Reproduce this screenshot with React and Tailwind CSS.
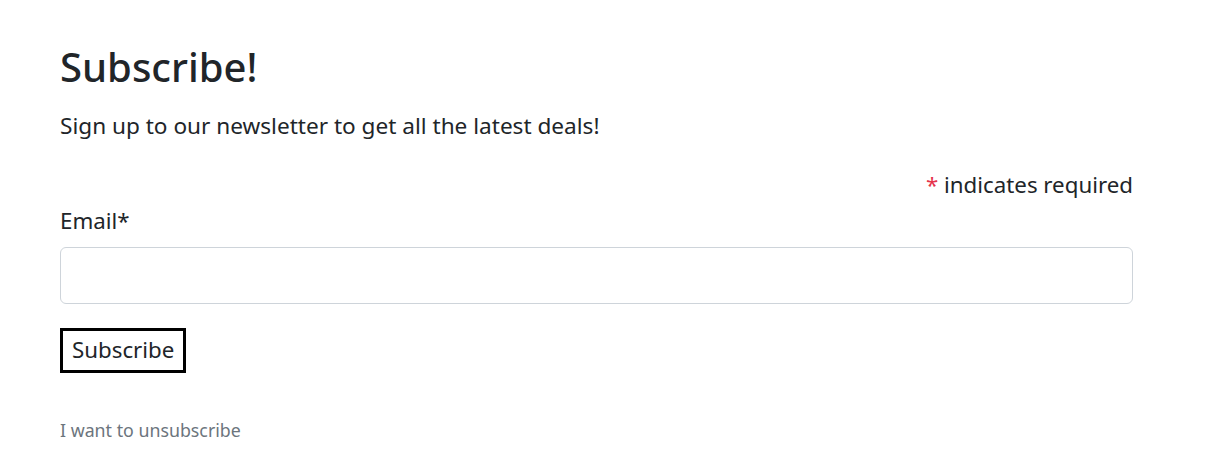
import React from "react";

export default function App() {
  return (
    <div
      className="min-h-[472px] bg-white text-[#212529] px-[60px] pt-[43px]"
      style={{ fontFamily: '"Noto Sans", "Open Sans", sans-serif' }}
    >
      <div className="w-[1073px]">
        {/* Heading */}
        <h1 className="text-[40px] leading-[1.2] font-medium">Subscribe!</h1>
        <p className="text-[22.6px] leading-[1.5] mt-[18px]">
          Sign up to our newsletter to get all the latest deals!
        </p>

        {/* Form */}
        <form className="mt-[25px]" onSubmit={(e) => e.preventDefault()}>
          <div className="text-right text-[22.3px] leading-[1.5]">
            <span className="text-[#e5334b]">*</span> indicates required
          </div>
          <label className="block text-[22.3px] leading-[1.5] mt-[3px]">Email*</label>
          <input
            type="email"
            className="block w-full h-[57px] mt-[9px] border border-[#ced4da] rounded-[6px] px-3 outline-none"
          />
          <button
            type="submit"
            className="mt-[24px] border-[3px] border-black px-[9px] h-[45px] text-[22.3px] leading-none bg-white"
          >
            Subscribe
          </button>
        </form>

        <a href="#" className="block mt-[44px] text-[17.8px] text-[#6c757d]">
          I want to unsubscribe
        </a>
      </div>
    </div>
  );
}
